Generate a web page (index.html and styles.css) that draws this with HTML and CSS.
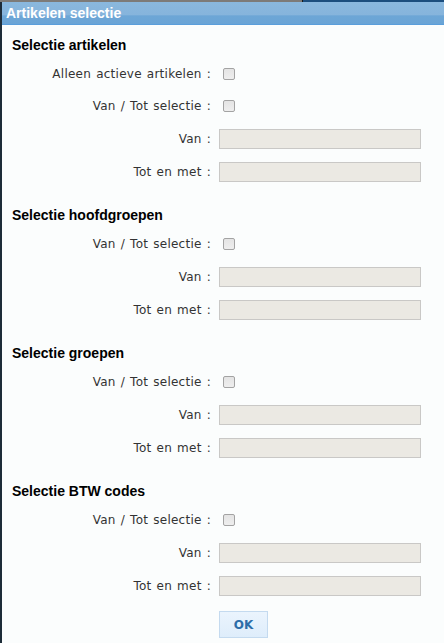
FILE: index.html
```html
<!DOCTYPE html>
<html lang="nl">

<head>
    <meta charset="UTF-8">
    <meta name="viewport" content="width=device-width, initial-scale=1.0">
    <title>Artikelen selectie</title>
    <link rel="stylesheet" href="styles.css">
</head>

<body>
    <div class="desk-strip">
        <div class="desk-gray"></div>
        <div class="desk-blue"></div>
    </div>

    <div class="dialog">
        <div class="dialog-title">Artikelen selectie</div>

        <div class="dialog-body">
            <!-- Artikelen -->
            <div class="section">
                <h3>Selectie artikelen</h3>
                <div class="row check-row">
                    <label>Alleen actieve artikelen :</label>
                    <div class="field"><input type="checkbox"></div>
                </div>
                <div class="row check-row">
                    <label>Van / Tot selectie :</label>
                    <div class="field"><input type="checkbox"></div>
                </div>
                <div class="row">
                    <label>Van :</label>
                    <div class="field"><input type="text" disabled></div>
                </div>
                <div class="row">
                    <label>Tot en met :</label>
                    <div class="field"><input type="text" disabled></div>
                </div>
            </div>

            <!-- Hoofdgroepen -->
            <div class="section">
                <h3>Selectie hoofdgroepen</h3>
                <div class="row check-row">
                    <label>Van / Tot selectie :</label>
                    <div class="field"><input type="checkbox"></div>
                </div>
                <div class="row">
                    <label>Van :</label>
                    <div class="field"><input type="text" disabled></div>
                </div>
                <div class="row">
                    <label>Tot en met :</label>
                    <div class="field"><input type="text" disabled></div>
                </div>
            </div>

            <!-- Groepen -->
            <div class="section">
                <h3>Selectie groepen</h3>
                <div class="row check-row">
                    <label>Van / Tot selectie :</label>
                    <div class="field"><input type="checkbox"></div>
                </div>
                <div class="row">
                    <label>Van :</label>
                    <div class="field"><input type="text" disabled></div>
                </div>
                <div class="row">
                    <label>Tot en met :</label>
                    <div class="field"><input type="text" disabled></div>
                </div>
            </div>

            <!-- BTW codes -->
            <div class="section">
                <h3>Selectie BTW codes</h3>
                <div class="row check-row">
                    <label>Van / Tot selectie :</label>
                    <div class="field"><input type="checkbox"></div>
                </div>
                <div class="row">
                    <label>Van :</label>
                    <div class="field"><input type="text" disabled></div>
                </div>
                <div class="row">
                    <label>Tot en met :</label>
                    <div class="field"><input type="text" disabled></div>
                </div>
            </div>

            <div class="buttons">
                <button id="okButton">OK</button>
            </div>
        </div>
    </div>
</body>

</html>
```

FILE: styles.css
```css
body {
    margin: 0;
    background-color: #fbfdfd;
    font-family: "DejaVu Sans", Verdana, sans-serif;
    height: 643px;
    overflow: hidden;
}

/* strip of the page behind the dialog */
.desk-strip {
    display: flex;
    height: 2px;
}

.desk-gray {
    width: 302px;
    background-color: #7d7b79;
    border-right: 1px solid #1a1a1a;
}

.desk-blue {
    flex: 1;
    background-color: #1c4e7e;
}

.dialog {
    border-left: 2px solid #1d2c38;
    height: 641px;
}

.dialog-title {
    height: 22px;
    line-height: 22px;
    padding-left: 4px;
    color: white;
    font-family: "Liberation Sans", Arial, sans-serif;
    font-weight: bold;
    font-size: 14px;
    background: linear-gradient(to bottom, #8ab8de 0%, #86b4dc 60%, #6da6d6 62%, #6aa4d6 100%);
    border-bottom: 1px solid #5a9edb;
}

.dialog-body {
    padding-top: 12px;
}

.section + .section {
    margin-top: 19px;
}

h3 {
    margin: 0 0 5px 10px;
    font-family: "Liberation Sans", Arial, sans-serif;
    font-size: 14px;
    line-height: 16px;
    color: #000;
}

.row {
    display: grid;
    grid-template-columns: 209px 202px;
    column-gap: 8px;
    align-items: center;
    height: 33px;
}

.check-row {
    height: 32px;
}

.row label {
    text-align: right;
    font-size: 12px;
    color: #333;
    letter-spacing: 0.25px;
    word-spacing: 1px;
}

.field {
    display: flex;
    align-items: center;
}

input[type="checkbox"] {
    appearance: none;
    width: 12px;
    height: 12px;
    margin: 0 0 0 4px;
    border: 1px solid #a3a3a3;
    border-radius: 2px;
    background: linear-gradient(to bottom, #e4e4e4, #eeeeee);
}

input[type="text"] {
    width: 202px;
    height: 20px;
    box-sizing: border-box;
    margin: 0;
    border: 1px solid #c9c8c6;
    background-color: #ebe9e3;
}

.buttons {
    margin-top: 9px;
    padding-left: 217px;
}

button {
    width: 49px;
    height: 27px;
    padding: 0;
    border: 1px solid #c4daef;
    background: linear-gradient(to bottom, #ebf4fd, #deedfb);
    color: #2e6da8;
    font-family: "DejaVu Sans", Verdana, sans-serif;
    font-weight: bold;
    font-size: 12px;
    cursor: pointer;
}
```
